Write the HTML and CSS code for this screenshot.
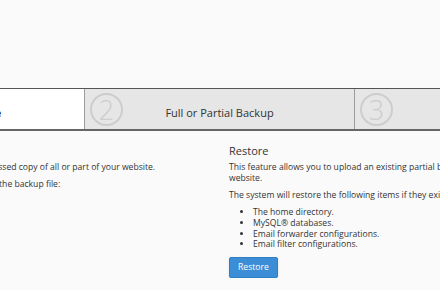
FILE: index.html
```html
<!DOCTYPE html>
<html lang="en">
<head>
  <meta charset="UTF-8" />
  <title>Backup Wizard</title>
  <link rel="stylesheet" href="styles.css">
</head>
<body>
  <div class="wizard">
    <!-- step bar -->
    <div class="steps">
      <div class="step step-current">
        <span class="step-num">1</span>
        <span class="step-label">Back Up or Restore</span>
      </div>
      <div class="step">
        <span class="step-num">2</span>
        <span class="step-label">Full or Partial Backup</span>
      </div>
      <div class="step">
        <span class="step-num">3</span>
        <span class="step-label">Download</span>
      </div>
    </div>

    <!-- two choices -->
    <div class="panels">
      <div class="panel">
        <h2>Back Up</h2>
        <p>Use this function to download a zip-compressed copy of all or part of your website.</p>
        <p>Click on the Back Up button below to select the backup file:</p>
      </div>
      <div class="panel">
        <h2>Restore</h2>
        <p>This feature allows you to upload an existing partial backup of your website.</p>
        <p>The system will restore the following items if they exist:</p>
        <ul>
          <li>The home directory.</li>
          <li>MySQL® databases.</li>
          <li>Email forwarder configurations.</li>
          <li>Email filter configurations.</li>
        </ul>
        <button class="btn-primary">Restore</button>
      </div>
    </div>
  </div>
</body>
</html>
```

FILE: styles.css
```css
/* ---------- base ---------- */
html, body {
  margin: 0;
  overflow: hidden;
  background: #fafafa;
}

body {
  font-family: "Open Sans", "Liberation Sans", sans-serif;
  font-size: 8.6px;
  line-height: 10.7px;
  color: #333;
}

/* page is scrolled sideways, first column sits off to the left */
.wizard {
  width: 810px;
  margin: 88px 0 0 -186px;
}

/* ---------- step bar ---------- */
.steps {
  display: flex;
  height: 40px;
  background: #e6e6e6;
  border-top: 1px solid #555;
  border-bottom: 2px solid #666;
}

.step {
  flex: 0 0 270px;
  box-sizing: border-box;
  display: grid;
  grid-template-columns: 33px 1fr 33px;
  align-items: center;
  padding: 0 5px;
}

.step + .step {
  border-left: 1px solid #9c9c9c;
}

.step-current {
  background: #fff;
}

.step-num {
  box-sizing: border-box;
  width: 33px;
  height: 33px;
  border: 2px solid #cdcdcd;
  border-radius: 50%;
  color: #cdcdcd;
  font-size: 27px;
  font-weight: 300;
  line-height: 29px;
  text-align: center;
}

.step-label {
  font-size: 11px;
  line-height: 13px;
  text-align: center;
  padding-top: 7px;
  color: #333;
}

.step-current .step-label {
  font-weight: bold;
  color: #222;
}

/* ---------- panels ---------- */
.panels {
  display: grid;
  grid-template-columns: 1fr 1fr;
}

.panel {
  padding: 0 10px;
}

.panel + .panel p {
  max-width: 280px;
}

.panel h2 {
  font-size: 11px;
  line-height: 13px;
  font-weight: normal;
  margin: 13px 0 5px;
}

.panel p {
  margin: 0 0 6.5px;
}

.panel ul {
  margin: 0 0 7px;
  padding-left: 24px;
}

.btn-primary {
  box-sizing: border-box;
  height: 21px;
  padding: 0 8px;
  font-family: inherit;
  font-size: 8.6px;
  color: #fff;
  background: #3b8dd6;
  border: 1px solid #2f7fc4;
  border-radius: 2px;
  box-shadow: 0 1px 2px rgba(0, 0, 0, 0.15);
  cursor: pointer;
}
```
